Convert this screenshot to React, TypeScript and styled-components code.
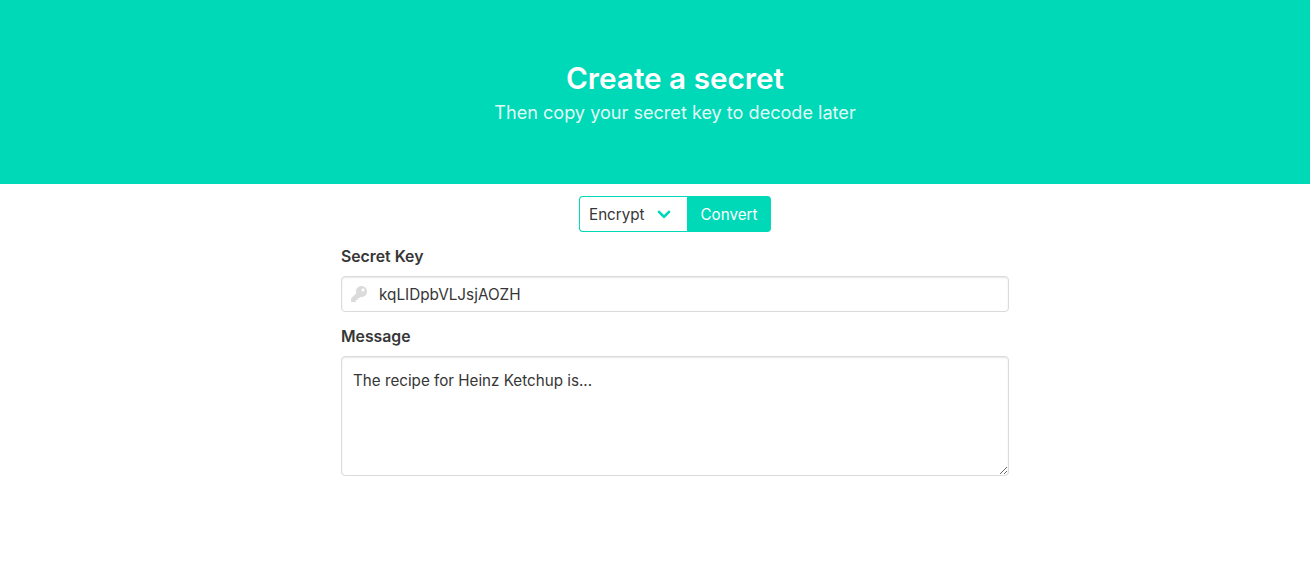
import { createGlobalStyle } from 'styled-components'
import styled from 'styled-components'
import { FaKey } from 'react-icons/fa'

const primary = '#00d9b7'

// the page is laid out wider than the window, centre sits at x=675
const GlobalStyle = createGlobalStyle`
html, body {
  margin: 0;
  padding: 0;
  overflow: hidden;
  background: #fff;
  font-family: Inter, "Liberation Sans", sans-serif;
  font-size: 15.2px;
  color: #363636;
}
#root { width: 1350px; }
* { box-sizing: border-box; }
`

const Hero = styled.section`
height: 184px;
background: ${primary};
display: flex;
flex-direction: column;
align-items: center;
padding-top: 58px;
color: #fff;
`
const Title = styled.h1`
margin: 0;
font-size: 29.7px;
line-height: 40px;
font-weight: 600;
`
const Subtitle = styled.h2`
margin: 0;
font-size: 18.1px;
line-height: 28px;
font-weight: 400;
color: rgba(255, 255, 255, 0.9);
`
const Main = styled.main`
width: 668px;
margin: 0 auto;
padding-top: 12px;
`
const Controls = styled.div`
display: flex;
justify-content: center;
margin-bottom: 14px;
`
const SelectWrap = styled.div`
position: relative;
width: 108px;
height: 36px;
&::after {
  content: '';
  position: absolute;
  top: 11px;
  right: 18px;
  width: 7px;
  height: 7px;
  border: 3px solid ${primary};
  border-top: 0;
  border-right: 0;
  border-radius: 1px;
  transform: rotate(-45deg);
  pointer-events: none;
}
`
const Select = styled.select`
appearance: none;
width: 100%;
height: 100%;
padding: 0 30px 0 9px;
font-family: inherit;
font-size: 15.2px;
color: #363636;
background: #fff;
border: 1px solid ${primary};
border-right: 0;
border-radius: 4px 0 0 4px;
outline: none;
`
const Button = styled.button`
width: 84px;
height: 36px;
padding: 0;
border: 0;
border-radius: 0 4px 4px 0;
background: ${primary};
color: #fff;
font-family: inherit;
font-size: 15.2px;
`
const Field = styled.div`
margin-bottom: 14px;
`
const Label = styled.label`
display: block;
height: 20px;
padding-top: 1px;
font-size: 15.8px;
line-height: 20px;
font-weight: 600;
color: #363636;
`
const InputWrap = styled.div`
position: relative;
height: 36px;
margin-top: 10px;
`
const KeyIcon = styled(FaKey)`
position: absolute;
left: 10px;
top: 10px;
width: 16px;
height: 16px;
color: #dbdbdb;
`
const Input = styled.input`
width: 100%;
height: 100%;
padding: 0 10px 0 37px;
font-family: inherit;
font-size: 15.3px;
color: #363636;
background: #fff;
border: 1px solid #dbdbdb;
border-radius: 4px;
box-shadow: inset 0 1px 2px rgba(10, 10, 10, 0.1);
outline: none;
`
const TextArea = styled.textarea`
display: block;
width: 100%;
height: 120px;
margin-top: 10px;
padding: 12px 11px 11px;
font-family: inherit;
font-size: 15.2px;
line-height: 24px;
color: #363636;
background: #fff;
border: 1px solid #dbdbdb;
border-radius: 4px;
box-shadow: inset 0 1px 2px rgba(10, 10, 10, 0.1);
outline: none;
resize: vertical;
`

export default function App () {
  return (
    <>
      <GlobalStyle />
      <Hero>
        <Title>Create a secret</Title>
        <Subtitle>Then copy your secret key to decode later</Subtitle>
      </Hero>
      <Main>
        <Controls>
          <SelectWrap>
            <Select defaultValue="Encrypt">
              <option>Encrypt</option>
              <option>Decrypt</option>
            </Select>
          </SelectWrap>
          <Button type="button">Convert</Button>
        </Controls>
        <Field>
          <Label>Secret Key</Label>
          <InputWrap>
            <KeyIcon />
            <Input defaultValue="kqLIDpbVLJsjAOZH" />
          </InputWrap>
        </Field>
        <Field>
          <Label>Message</Label>
          <TextArea defaultValue="The recipe for Heinz Ketchup is..." />
        </Field>
      </Main>
    </>
  )
}
